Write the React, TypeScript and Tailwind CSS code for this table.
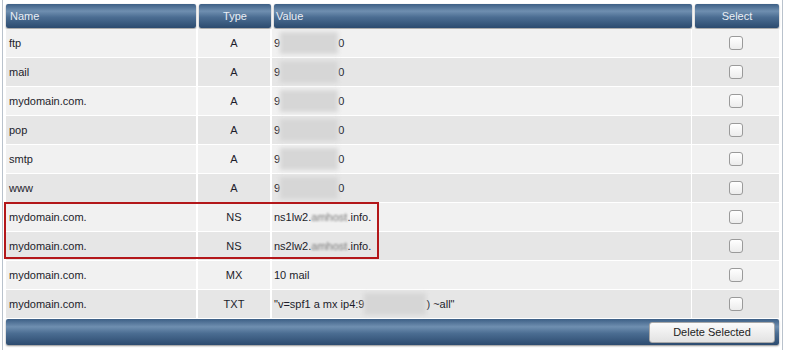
import React from "react";

type Rec = { name: string; type: string; value: React.ReactNode };

const Blur = ({ w }: { w: number }) => (
  <span
    className="inline-block h-[22px] bg-[#d6d6d6] blur-[2px] align-middle"
    style={{ width: w }}
  />
);

const Host = () => <span className="blur-[1.2px] text-[#777]">amhost</span>;

const ip = (
  <span className="inline-flex items-center">
    9<Blur w={58} />0
  </span>
);

const records: Rec[] = [
  { name: "ftp", type: "A", value: ip },
  { name: "mail", type: "A", value: ip },
  { name: "mydomain.com.", type: "A", value: ip },
  { name: "pop", type: "A", value: ip },
  { name: "smtp", type: "A", value: ip },
  { name: "www", type: "A", value: ip },
  {
    name: "mydomain.com.",
    type: "NS",
    value: (
      <span>
        ns1lw2.<Host />.info.
      </span>
    ),
  },
  {
    name: "mydomain.com.",
    type: "NS",
    value: (
      <span>
        ns2lw2.<Host />.info.
      </span>
    ),
  },
  { name: "mydomain.com.", type: "MX", value: "10 mail" },
  {
    name: "mydomain.com.",
    type: "TXT",
    value: (
      <span className="inline-flex items-center">
        "v=spf1 a mx ip4:9<Blur w={62} />) ~all"
      </span>
    ),
  },
];

const bar =
  "bg-[linear-gradient(to_bottom,#3d5f85_0%,#6f8fb0_30%,#4b6d92_55%,#2c4b6f_100%)] shadow-[0_1px_2px_rgba(0,0,0,0.45)]";

const Check = () => (
  <span className="block h-[14px] w-[14px] rounded-[3px] border border-[#9a9a9a] bg-[linear-gradient(to_bottom,#ffffff,#ececec)]" />
);

function Row({ r, i }: { r: Rec; i: number }) {
  const bg = i % 2 === 0 ? "bg-[#f1f1f1]" : "bg-[#e6e6e6]";
  return (
    <div
      className={`grid h-[29px] grid-cols-[192px_74px_420px_1fr] border-b border-white ${bg}`}
    >
      <div className="flex items-center border-r-2 border-white pl-[3px]">{r.name}</div>
      <div className="flex items-center justify-center border-r-2 border-white">{r.type}</div>
      <div className="flex items-center border-r border-white pl-[2px]">{r.value}</div>
      <div className="flex items-center justify-center">
        <Check />
      </div>
    </div>
  );
}

export default function App() {
  return (
    <div
      className="h-[350px] w-[785px] bg-white text-[11px] text-[#1d1d2b]"
      style={{ fontFamily: '"Liberation Sans", Arial, sans-serif' }}
    >
      <div className="mx-[2px] h-full border-x border-[#b9c2cc] px-[3px] pt-[4px]">
        {/* column headers */}
        <div className="grid h-[24px] grid-cols-[190px_72px_418px_1fr] gap-x-[3px] text-[#e9eef5]">
          <div className={`flex items-center rounded-[2px] pl-[4px] ${bar}`}>Name</div>
          <div className={`flex items-center justify-center rounded-[2px] ${bar}`}>Type</div>
          <div className={`flex items-center rounded-[2px] pl-[2px] ${bar}`}>Value</div>
          <div className={`flex items-center justify-center rounded-[2px] ${bar}`}>Select</div>
        </div>

        {/* records */}
        <div className="relative mt-[1px]">
          {records.map((r, i) => (
            <Row key={i} r={r} i={i} />
          ))}
          <div className="pointer-events-none absolute left-[-2px] top-[173px] h-[57px] w-[375px] border-2 border-[#b3171a]" />
        </div>

        {/* footer */}
        <div className={`flex h-[26px] items-center justify-end rounded-[2px] pr-[4px] ${bar}`}>
          <button className="h-[21px] w-[126px] rounded-[3px] border border-[#a8a8a8] bg-[linear-gradient(to_bottom,#fbfbfb,#e2e2e2)] text-[11px] text-[#222]">
            Delete Selected
          </button>
        </div>
      </div>
    </div>
  );
}
